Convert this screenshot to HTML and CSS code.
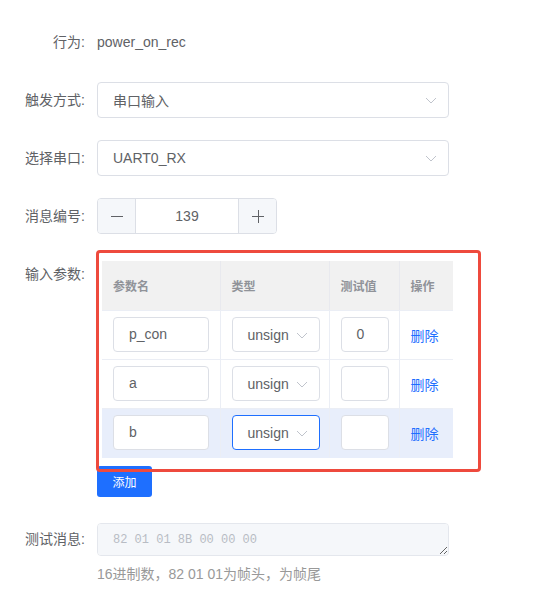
FILE: index.html
```html
<!DOCTYPE html>
<html>
<head>
<meta charset="UTF-8">
<title>消息配置</title>
<link rel="stylesheet" href="styles.css">
</head>
<body>
<div class="form">
  <div class="item">
    <label class="label">行为:</label>
    <div class="content plain">power_on_rec</div>
  </div>
  <div class="item">
    <label class="label">触发方式:</label>
    <div class="content">
      <div class="select wide">
        <span class="select-text">串口输入</span>
        <svg class="arrow" width="12" height="7" viewBox="0 0 12 7"><path d="M1 1 L6 6 L11 1" fill="none" stroke="#c0c4cc" stroke-width="1"/></svg>
      </div>
    </div>
  </div>
  <div class="item">
    <label class="label">选择串口:</label>
    <div class="content">
      <div class="select wide">
        <span class="select-text">UART0_RX</span>
        <svg class="arrow" width="12" height="7" viewBox="0 0 12 7"><path d="M1 1 L6 6 L11 1" fill="none" stroke="#c0c4cc" stroke-width="1"/></svg>
      </div>
    </div>
  </div>
  <div class="item">
    <label class="label">消息编号:</label>
    <div class="content">
      <div class="number">
        <span class="num-btn left">
          <svg width="14" height="14" viewBox="0 0 14 14"><path d="M1 7.5 H13" stroke="#606266" stroke-width="1"/></svg>
        </span>
        <span class="num-value">139</span>
        <span class="num-btn right">
          <svg width="14" height="14" viewBox="0 0 14 14"><path d="M1 7.5 H13 M7.5 1 V14" stroke="#606266" stroke-width="1"/></svg>
        </span>
      </div>
    </div>
  </div>
  <div class="item params">
    <label class="label">输入参数:</label>
    <div class="content">
      <div class="table-wrap">
        <table class="param-table">
          <thead>
            <tr>
              <th class="c1">参数名</th>
              <th class="c2">类型</th>
              <th class="c3">测试值</th>
              <th class="c4">操作</th>
            </tr>
          </thead>
          <tbody>
            <tr>
              <td><div class="cell-input name">p_con</div></td>
              <td>
                <div class="select small">
                  <span class="clip">unsign</span>
                  <svg class="arrow" width="12" height="7" viewBox="0 0 12 7"><path d="M1 1 L6 6 L11 1" fill="none" stroke="#c0c4cc" stroke-width="1"/></svg>
                </div>
              </td>
              <td><div class="cell-input value">0</div></td>
              <td><a class="link">删除</a></td>
            </tr>
            <tr>
              <td><div class="cell-input name">a</div></td>
              <td>
                <div class="select small">
                  <span class="clip">unsign</span>
                  <svg class="arrow" width="12" height="7" viewBox="0 0 12 7"><path d="M1 1 L6 6 L11 1" fill="none" stroke="#c0c4cc" stroke-width="1"/></svg>
                </div>
              </td>
              <td><div class="cell-input value"></div></td>
              <td><a class="link">删除</a></td>
            </tr>
            <tr class="current">
              <td><div class="cell-input name">b</div></td>
              <td>
                <div class="select small focus">
                  <span class="clip">unsign</span>
                  <svg class="arrow" width="12" height="7" viewBox="0 0 12 7"><path d="M1 1 L6 6 L11 1" fill="none" stroke="#c0c4cc" stroke-width="1"/></svg>
                </div>
              </td>
              <td><div class="cell-input value"></div></td>
              <td><a class="link">删除</a></td>
            </tr>
          </tbody>
        </table>
      </div>
      <button class="btn-primary">添加</button>
    </div>
  </div>
  <div class="item">
    <label class="label">测试消息:</label>
    <div class="content">
      <textarea class="msg" disabled placeholder="82 01 01 8B 00 00 00"></textarea>
      <div class="help">16进制数，82 01 01为帧头，为帧尾</div>
    </div>
  </div>
</div>
<!-- 标注框 -->
<div class="mark"></div>
</body>
</html>
```

FILE: styles.css
```css
* {
  margin: 0;
  padding: 0;
  box-sizing: border-box;
}

body {
  font-family: "Liberation Sans", "Noto Sans CJK SC", sans-serif;
  font-size: 14px;
  color: #606266;
  background: #fff;
}

.form {
  padding-top: 24px;
}

.item {
  display: flex;
  align-items: flex-start;
  margin-bottom: 22px;
}

.label {
  width: 97px;
  flex-shrink: 0;
  padding-right: 12px;
  text-align: right;
  line-height: 36px;
  color: #606266;
}

.plain {
  line-height: 36px;
}

.select {
  position: relative;
  display: flex;
  align-items: center;
  height: 36px;
  border: 1px solid #dcdfe6;
  border-radius: 4px;
  padding: 0 15px;
  background: #fff;
}

.select.wide {
  width: 352px;
}

.select .arrow {
  position: absolute;
  right: 11px;
  top: 14px;
}

.number {
  display: flex;
  width: 180px;
  height: 36px;
  border: 1px solid #dcdfe6;
  border-radius: 4px;
  overflow: hidden;
}

.num-btn {
  width: 38px;
  display: flex;
  align-items: center;
  justify-content: center;
  background: #f5f7fa;
}

.num-btn.left {
  border-right: 1px solid #dcdfe6;
}

.num-btn.right {
  border-left: 1px solid #dcdfe6;
}

.num-value {
  flex: 1;
  text-align: center;
  line-height: 34px;
}

.params {
  margin-bottom: 24px;
}

.table-wrap {
  padding: 5px 0 0 5px;
}

.param-table {
  border-collapse: collapse;
  table-layout: fixed;
  width: 351px;
}

.param-table th {
  height: 49px;
  background: #f1f1f1;
  color: #909399;
  font-size: 12px;
  font-weight: bold;
  text-align: left;
  padding: 0 11px;
  border-right: 1px solid #e8e9ee;
  border-bottom: 1px solid #ebeef5;
}

.param-table .c1 { width: 118px; }
.param-table .c2 { width: 109px; }
.param-table .c3 { width: 70px; }
.param-table .c4 { width: 54px; }

.param-table th:last-child,
.param-table td:last-child {
  border-right: none;
}

.param-table td {
  height: 49px;
  padding: 0 10px 0 11px;
  border-right: 1px solid #ebeef5;
  border-bottom: 1px solid #ebeef5;
  vertical-align: middle;
}

.param-table tr.current td {
  background: #e8eefb;
  border-bottom-color: #e8eefb;
}

.cell-input {
  height: 35px;
  line-height: 33px;
  border: 1px solid #dcdfe6;
  border-radius: 4px;
  padding: 0 15px;
  background: #fff;
}

.cell-input.name {
  width: 96px;
}

.cell-input.value {
  width: 48px;
}

.select.small {
  width: 88px;
  height: 35px;
  padding-right: 0;
}

.select.focus {
  border-color: #1e6fff;
}

.clip {
  white-space: nowrap;
}

.link {
  color: #1e6fff;
  cursor: pointer;
}

.btn-primary {
  display: block;
  margin-top: 8px;
  width: 55px;
  height: 31px;
  border: none;
  border-radius: 3px;
  background: #1e6fff;
  color: #fff;
  font-family: "Liberation Sans", "Noto Sans CJK SC", sans-serif;
  font-size: 12px;
}

.msg {
  display: block;
  margin-top: 2px;
  width: 352px;
  height: 33px;
  padding: 6px 15px;
  border: 1px solid #e4e7ed;
  border-radius: 4px;
  background: #f5f7fa;
  font-family: "Liberation Mono", monospace;
  font-size: 12px;
  line-height: 20px;
  resize: vertical;
}

.msg::placeholder {
  color: #b8bcc4;
}

.help {
  margin-top: 8px;
  line-height: 20px;
  color: #999;
}

.mark {
  position: absolute;
  left: 96px;
  top: 250px;
  width: 385px;
  height: 222px;
  border: 3px solid #ee4a3d;
  border-radius: 4px;
  pointer-events: none;
}
```
